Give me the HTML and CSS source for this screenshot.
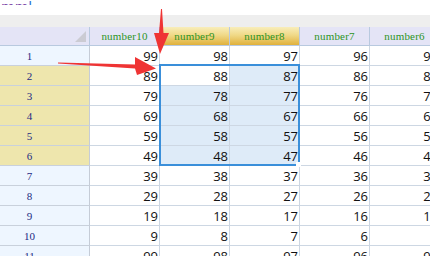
FILE: index.html
```html
<!DOCTYPE html>
<html lang="en">
<head>
  <meta charset="UTF-8">
  <title>Grid selection</title>
  <link rel="stylesheet" href="styles.css">
</head>
<body>
<div class="page">
  <!-- cut-off caption above the toolbar -->
  <div class="topline"><span class="cap">mm</span><span class="cap-end">l</span></div>
  <div class="gap"></div>
  <div class="toolbar"></div>

  <div class="sheet">
    <div class="row head">
      <div class="corner"><span class="corner-tri"></span></div>
      <div class="col-h">number10</div>
      <div class="col-h sel">number9</div>
      <div class="col-h sel">number8</div>
      <div class="col-h">number7</div>
      <div class="col-h">number6</div>
    </div>
    <div class="row">
      <div class="row-h">1</div><div class="cell">99</div><div class="cell">98</div><div class="cell">97</div><div class="cell">96</div><div class="cell">95</div>
    </div>
    <div class="row">
      <div class="row-h sel">2</div><div class="cell">89</div><div class="cell">88</div><div class="cell sel">87</div><div class="cell">86</div><div class="cell">85</div>
    </div>
    <div class="row">
      <div class="row-h sel">3</div><div class="cell">79</div><div class="cell sel">78</div><div class="cell sel">77</div><div class="cell">76</div><div class="cell">75</div>
    </div>
    <div class="row">
      <div class="row-h sel">4</div><div class="cell">69</div><div class="cell sel">68</div><div class="cell sel">67</div><div class="cell">66</div><div class="cell">65</div>
    </div>
    <div class="row">
      <div class="row-h sel">5</div><div class="cell">59</div><div class="cell sel">58</div><div class="cell sel">57</div><div class="cell">56</div><div class="cell">55</div>
    </div>
    <div class="row">
      <div class="row-h sel">6</div><div class="cell">49</div><div class="cell sel">48</div><div class="cell sel">47</div><div class="cell">46</div><div class="cell">45</div>
    </div>
    <div class="row">
      <div class="row-h">7</div><div class="cell">39</div><div class="cell">38</div><div class="cell">37</div><div class="cell">36</div><div class="cell">35</div>
    </div>
    <div class="row">
      <div class="row-h">8</div><div class="cell">29</div><div class="cell">28</div><div class="cell">27</div><div class="cell">26</div><div class="cell">25</div>
    </div>
    <div class="row">
      <div class="row-h">9</div><div class="cell">19</div><div class="cell">18</div><div class="cell">17</div><div class="cell">16</div><div class="cell">15</div>
    </div>
    <div class="row">
      <div class="row-h">10</div><div class="cell">9</div><div class="cell">8</div><div class="cell">7</div><div class="cell">6</div><div class="cell">5</div>
    </div>
    <div class="row">
      <div class="row-h">11</div><div class="cell">99</div><div class="cell">98</div><div class="cell">97</div><div class="cell">96</div><div class="cell">95</div>
    </div>
  </div>

  <!-- selection frame + fill handle -->
  <div class="selection"></div>
  <div class="handle"></div>

  <!-- red callout arrows -->
  <svg class="arrows" width="430" height="256" viewBox="0 0 430 256">
    <polygon fill="#ef3434" points="161,9 162,9 163.5,33 169,33 160,54 154,33 159,33"/>
    <polygon fill="#ef3434" points="58,62.5 58,63.5 135,68.5 137,75 156,68.5 135,57 135,64.5"/>
  </svg>
</div>
</body>
</html>
```

FILE: styles.css
```css
body {
  margin: 0;
  background: #fff;
  font-family: 'Liberation Serif', serif;
}
.page {
  position: relative;
  width: 430px;
  height: 256px;
  overflow: hidden;
}
.topline {
  height: 5px;
  overflow: hidden;
  padding-left: 1px;
  font-family: 'DejaVu Sans', sans-serif;
  font-size: 14px;
  line-height: 14px;
}
.topline span {
  display: inline-block;
  margin-top: -6px;
}
.cap { color: #7b46a6; }
.cap-end { color: #2f72d6; }
.gap { height: 10px; }
.toolbar {
  height: 12px;
  background: #eeeeee;
}
.sheet {
  width: 440px;
}
.row {
  display: grid;
  grid-template-columns: 90px 70px 70px 70px 70px 70px;
  height: 20px;
}
.row > div {
  box-sizing: border-box;
  border-right: 1px solid #cdd7e3;
  border-bottom: 1px solid #cdd7e3;
}
.row.head {
  height: 19px;
}
.row.head > div {
  background: #e4e4f6;
  border-right-color: #b8c9df;
  border-bottom-color: #b8c9df;
}
.corner {
  position: relative;
}
.corner-tri {
  position: absolute;
  right: 3px;
  bottom: 3px;
  width: 0;
  height: 0;
  border-left: 11px solid transparent;
  border-bottom: 11px solid #cbcbd3;
}
.col-h {
  display: flex;
  align-items: center;
  justify-content: center;
  color: #2c9424;
  font-size: 11px;
  letter-spacing: 0.2px;
}
.row.head > .col-h.sel {
  background: linear-gradient(#f8edba, #f0d987 45%, #e0b13c);
}
.row-h {
  display: flex;
  align-items: center;
  justify-content: center;
  padding-right: 30px;
  background: #eef6ff;
  color: #1d2a82;
  font-size: 11px;
}
.row > .row-h {
  border-right-color: #c5ccd7;
  border-bottom-color: #c9d1dc;
}
.row-h.sel {
  background: #eee6ad;
}
.cell {
  display: flex;
  align-items: center;
  justify-content: flex-end;
  padding-right: 1px;
  font-family: 'Open Sans', sans-serif;
  font-size: 13px;
  color: #111;
}
.cell.sel {
  background: #deebf8;
}
.selection {
  position: absolute;
  left: 159px;
  top: 64px;
  width: 141px;
  height: 102px;
  box-sizing: border-box;
  border: 2px solid #3a8fda;
}
.handle {
  position: absolute;
  left: 296px;
  top: 162px;
  width: 5px;
  height: 5px;
  background: #fff;
}
.arrows {
  position: absolute;
  left: 0;
  top: 0;
  pointer-events: none;
}
```
